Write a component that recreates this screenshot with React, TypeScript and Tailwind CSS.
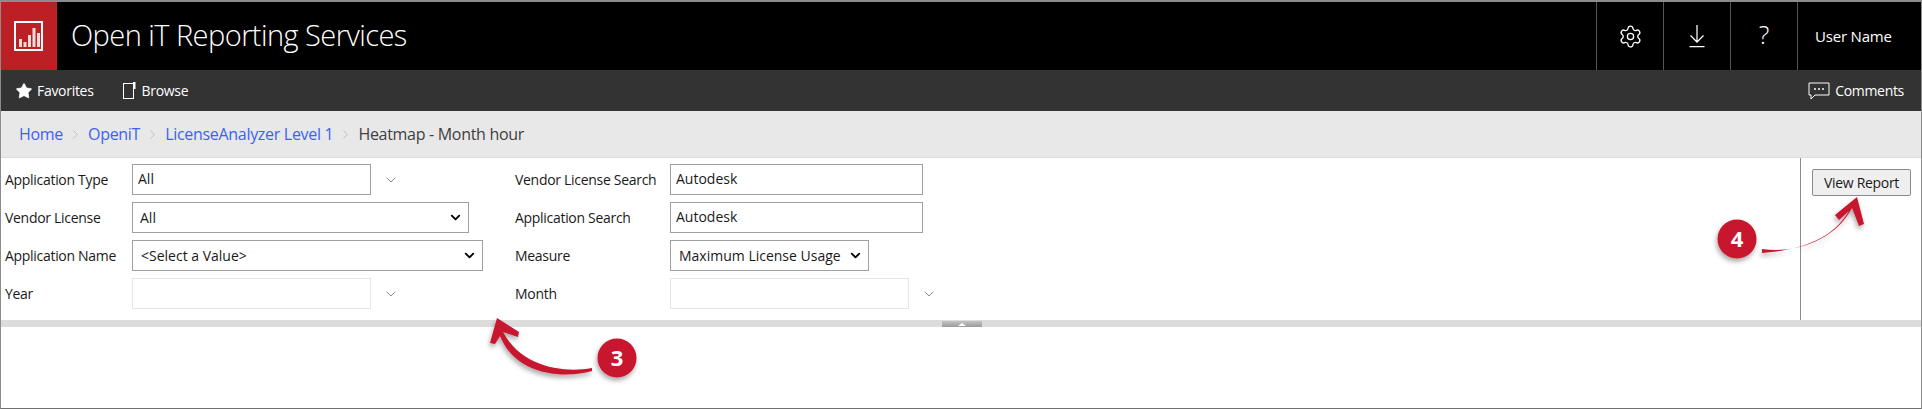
import React from "react";
import { Settings, ChevronDown, ChevronRight, Star } from "lucide-react";

const Select = ({ w, value, pl }: { w: string; value: string; pl: string }) => (
  <div className={`relative h-[31px] ${w}`}>
    <select
      defaultValue={value}
      className={`appearance-none w-full h-full border border-[#a0a0a0] bg-white text-[14px] text-[#1a1a1a] outline-none ${pl}`}
    >
      <option>{value}</option>
    </select>
    <ChevronDown className="absolute right-[6px] top-[8px] w-[15px] h-[15px] text-black pointer-events-none" strokeWidth={3} />
  </div>
);

const Combo = ({ value, disabled }: { value?: string; disabled?: boolean }) => (
  <div className="flex items-center">
    <input
      readOnly
      value={value ?? ""}
      className={`w-[239px] h-[31px] bg-white border text-[14px] text-[#1a1a1a] pl-[5px] pb-[2px] outline-none ${
        disabled ? "border-[#e6e6e6]" : "border-[#a0a0a0]"
      }`}
    />
    <ChevronDown className="ml-[12px] w-[16px] h-[16px] text-[#44546a]" strokeWidth={1} />
  </div>
);

const Label = ({ children }: { children: React.ReactNode }) => (
  <label className="text-[14px] text-[#1a1a1a] whitespace-nowrap tracking-[-0.3px]">{children}</label>
);

const TextBox = ({ value }: { value: string }) => (
  <input
    readOnly
    value={value}
    className="w-[253px] h-[31px] bg-white border border-[#a0a0a0] text-[14px] text-[#1a1a1a] pl-[5px] pb-[2px] outline-none"
  />
);

const Crumb = ({ children }: { children: React.ReactNode }) => (
  <a className="text-[#3b63f0]">{children}</a>
);

const Sep = () => <ChevronRight className="w-[15px] h-[15px] mx-[5px] text-[#b5b5b5]" strokeWidth={1.25} />;

const Cell = ({ children }: { children: React.ReactNode }) => (
  <div className="w-[67px] h-full border-l border-[#555] flex items-center justify-center">{children}</div>
);

export default function App() {
  return (
    <div
      className="relative w-[1922px] h-[409px] overflow-hidden bg-white border-t-2 border-l border-r border-b border-t-[#8c8c8c] border-l-[#8c8c8c] border-r-[#8c8c8c] border-b-[#707070] flex flex-col"
      style={{ fontFamily: '"Open Sans", "Noto Sans", sans-serif' }}
    >
      {/* Header */}
      <header className="h-[68px] shrink-0 bg-black flex items-stretch text-white">
        <div className="w-[56px] bg-[#bc2025] flex items-center justify-center">
          <svg width="30" height="30" viewBox="0 0 30 30" fill="none">
            <rect x="1" y="1" width="27" height="28" stroke="white" strokeWidth="2" fill="none" />
            <rect x="5" y="18" width="3" height="8" fill="#f6d9d9" />
            <rect x="9.5" y="21" width="3" height="5" fill="#f6d9d9" />
            <rect x="14" y="14" width="3" height="12" fill="#f6d9d9" />
            <rect x="18.5" y="7" width="3" height="19" fill="#f6d9d9" />
            <rect x="23" y="12" width="3" height="14" fill="#f6d9d9" />
          </svg>
        </div>
        <div className="flex-1 flex items-center pl-[14px] pb-[2px] text-[29px] font-light tracking-[-0.55px]">
          Open iT Reporting Services
        </div>
        <Cell>
          <Settings className="w-[25px] h-[25px]" strokeWidth={1.25} />
        </Cell>
        <Cell>
          <svg width="16" height="24" viewBox="0 0 16 24" fill="none" stroke="white" strokeWidth="1.25">
            <path d="M8 1V18M1.5 11.5L8 18L14.5 11.5M0.5 22.5H15.5" />
          </svg>
        </Cell>
        <Cell>
          <span className="text-[25px] font-light leading-none pb-[4px]">?</span>
        </Cell>
        <div className="w-[124px] h-full border-l border-[#555] flex items-center pl-[17px] text-[15px] tracking-[-0.2px]">
          User Name
        </div>
      </header>

      {/* Nav */}
      <nav className="h-[41px] shrink-0 bg-[#333] flex items-center text-white text-[14px] tracking-[-0.3px]">
        <Star className="ml-[14px] w-[18px] h-[18px]" fill="white" strokeWidth={1} />
        <span className="ml-[4px]">Favorites</span>
        <svg className="ml-[29px]" width="13" height="18" viewBox="0 0 13 18" fill="none">
          <rect x="0.5" y="1.5" width="10" height="15" stroke="white" />
          <rect x="10" y="0" width="2.5" height="7" fill="white" />
        </svg>
        <span className="ml-[6px]">Browse</span>
        <div className="ml-auto flex items-center pr-[17px]">
          <svg width="22" height="18" viewBox="0 0 22 18" fill="none" stroke="white" strokeWidth="1">
            <path d="M1 1H21V13H7L3 17V13H1Z" />
            <circle cx="7" cy="7" r="0.6" fill="white" />
            <circle cx="11" cy="7" r="0.6" fill="white" />
            <circle cx="15" cy="7" r="0.6" fill="white" />
          </svg>
          <span className="ml-[5px]">Comments</span>
        </div>
      </nav>

      {/* Breadcrumb */}
      <div className="h-[47px] shrink-0 bg-[#e8e8e8] border-b border-[#dcdcdc] flex items-center pl-[18px] text-[16px] tracking-[-0.3px] text-[#404040]">
        <Crumb>Home</Crumb>
        <Sep />
        <Crumb>OpeniT</Crumb>
        <Sep />
        <Crumb>LicenseAnalyzer Level 1</Crumb>
        <Sep />
        <span>Heatmap - Month hour</span>
      </div>

      {/* Parameters */}
      <div className="h-[162px] shrink-0 flex">
        <div className="flex-1 pl-[4px] pt-[6px] grid grid-cols-[127px_383px_155px_1fr] grid-rows-[31px_31px_31px_31px] gap-y-[7px] items-center">
          <Label>Application Type</Label>
          <Combo value="All" />
          <Label>Vendor License Search</Label>
          <TextBox value="Autodesk" />

          <Label>Vendor License</Label>
          <Select w="w-[337px]" value="All" pl="pl-[7px]" />
          <Label>Application Search</Label>
          <TextBox value="Autodesk" />

          <Label>Application Name</Label>
          <Select w="w-[351px]" value="<Select a Value>" pl="pl-[8px]" />
          <Label>Measure</Label>
          <Select w="w-[199px]" value="Maximum License Usage" pl="pl-[8px]" />

          <Label>Year</Label>
          <Combo disabled />
          <Label>Month</Label>
          <Combo disabled />
        </div>
        <div className="w-[121px] border-l border-[#8c8c8c] pl-[11px] pt-[11px]">
          <button className="w-[99px] h-[27px] bg-[#efefef] border border-[#8a8a8a] rounded-[2px] text-[14px] tracking-[-0.3px] text-[#1a1a1a]">
            View Report
          </button>
        </div>
      </div>

      {/* Splitter */}
      <div className="h-[7px] shrink-0 bg-[#dcdcdc] flex justify-center">
        <div className="ml-[1px] w-[40px] h-[6px] mt-[1px] bg-gradient-to-b from-[#c4c4c4] to-[#9a9a9a] flex items-center justify-center">
          <div className="w-0 h-0 border-l-[4px] border-r-[4px] border-b-[3px] border-l-transparent border-r-transparent border-b-white" />
        </div>
      </div>

      <div className="flex-1 bg-white" />

      {/* Annotations */}
      <svg className="absolute left-[-1px] top-[-2px] pointer-events-none" width="1922" height="409" viewBox="0 0 1922 409">
        <defs>
          <filter id="s" x="-30%" y="-30%" width="160%" height="160%">
            <feDropShadow dx="-1" dy="3" stdDeviation="2.5" floodColor="#000" floodOpacity="0.35" />
          </filter>
        </defs>
        <g filter="url(#s)" fill="#c8142f">
          <path d="M592 368 C 565 373, 522 368, 503 332 L 518 337 L 519 332 L 497 318 L 490 343 L 495 344 L 500 336 C 516 376, 565 379, 592 371 Z" />
          <circle cx="617" cy="358" r="19.5" />
          <path d="M1762 249 C 1800 254, 1836 238, 1852 208 L 1859 226 L 1864 224 L 1857 197 L 1835 215 L 1839 220 L 1849 211 C 1832 240, 1800 250, 1762 253 Z" />
          <circle cx="1737" cy="239" r="19.5" />
        </g>
        <text x="617" y="366" textAnchor="middle" fontSize="22" fontWeight="700" fill="white" fontFamily="'Open Sans', sans-serif">3</text>
        <text x="1737" y="247" textAnchor="middle" fontSize="22" fontWeight="700" fill="white" fontFamily="'Open Sans', sans-serif">4</text>
      </svg>
    </div>
  );
}
